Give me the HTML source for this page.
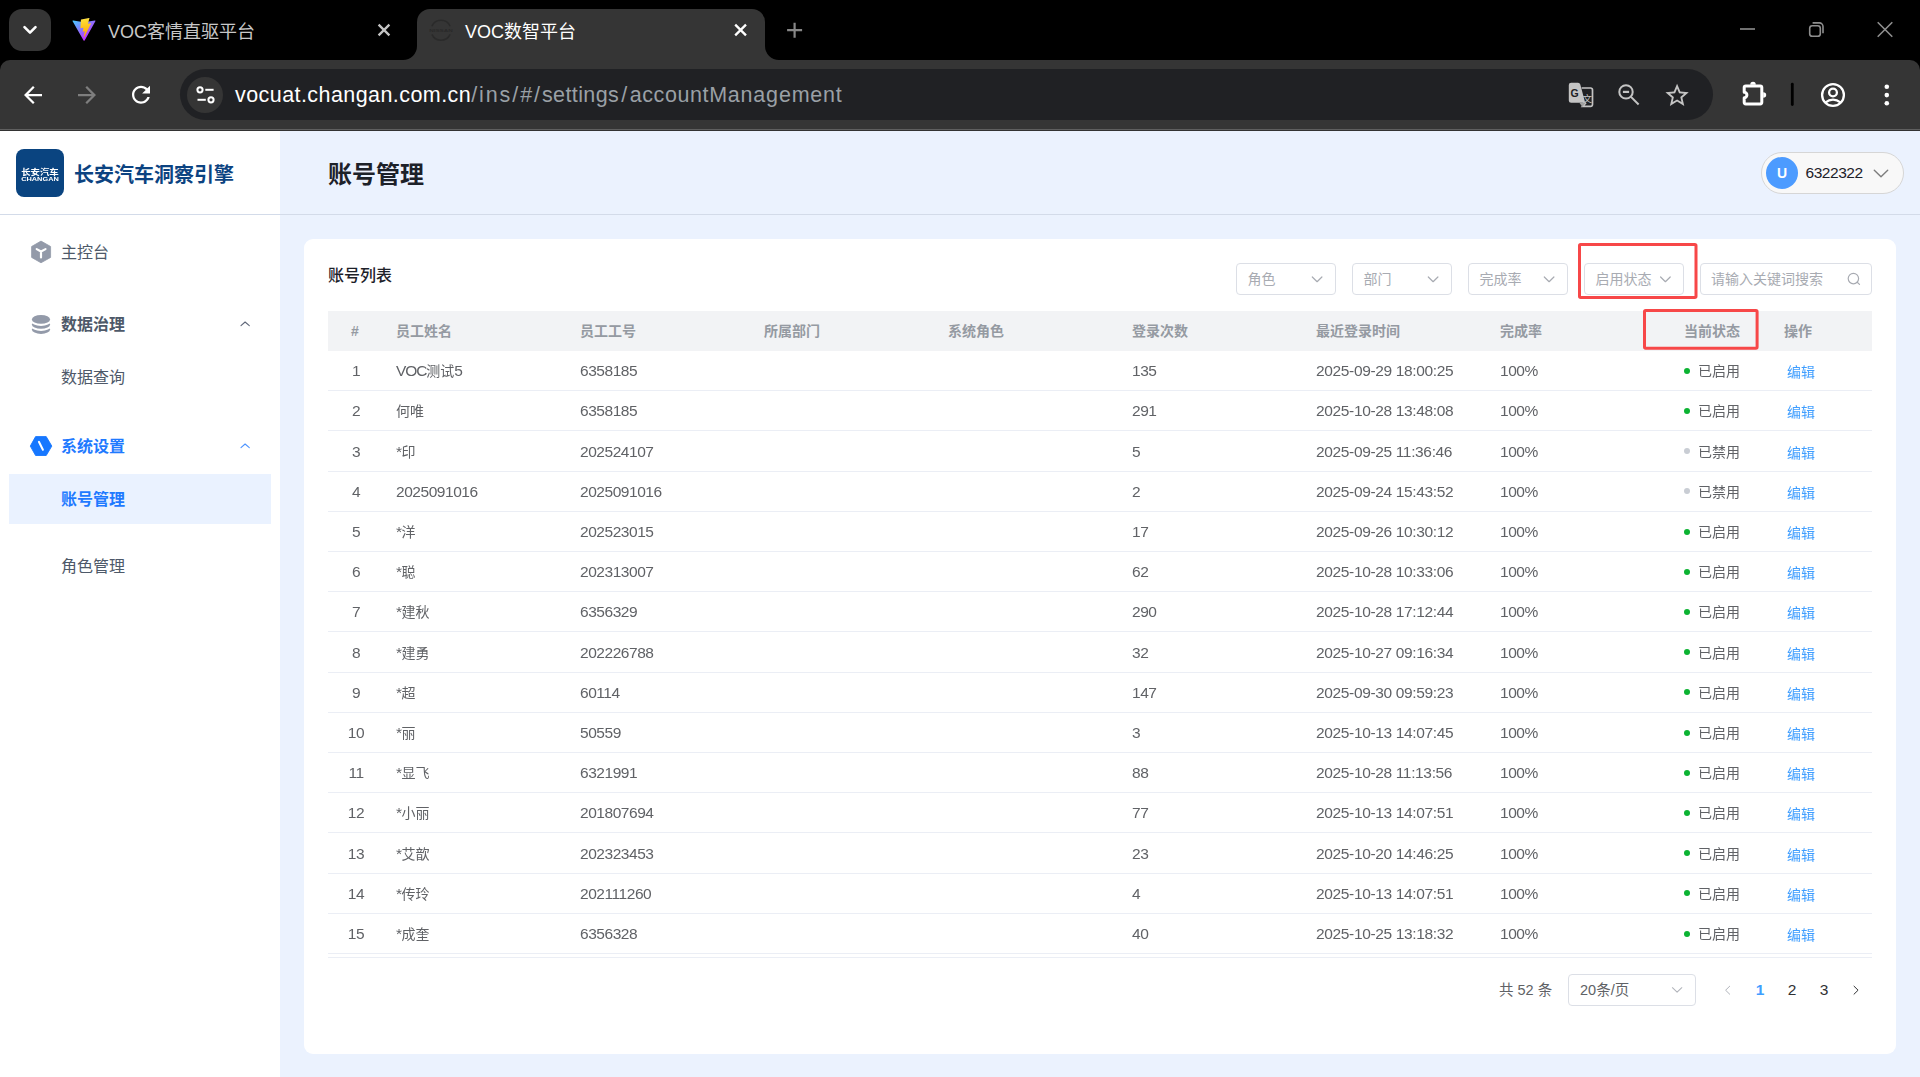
<!DOCTYPE html>
<html lang="zh-CN">
<head>
<meta charset="utf-8">
<title>VOC数智平台</title>
<style>
*{box-sizing:border-box;margin:0;padding:0}
html,body{width:1920px;height:1077px;overflow:hidden;background:#ebf2fe}
body{position:relative;font-family:"Liberation Sans","Noto Sans CJK SC",sans-serif;color:#606266}
.abs{position:absolute}
svg{position:absolute;overflow:visible}
/* ---------- browser chrome ---------- */
#tabstrip{left:0;top:0;width:1920px;height:80px;background:#000}
#toolbar{left:0;top:60px;width:1920px;height:69px;background:#353535;border-radius:10px 10px 0 0}
#tbline1{left:0;top:129px;width:1920px;height:1px;background:#5f5f5f}
#tbline2{left:0;top:130px;width:1920px;height:1px;background:#333}
#tabsearch{left:9px;top:9px;width:42px;height:42px;border-radius:13px;background:#353535}
#acttab{left:417px;top:9px;width:348px;height:52px;background:#353535;border-radius:13px 13px 0 0}
.tabtxt{font-size:18px;line-height:24px;white-space:nowrap;top:20px}
#omni{left:180px;top:69px;width:1533px;height:51px;border-radius:26px;background:#202124}
#siteinfo{left:187px;top:76.5px;width:36px;height:36px;border-radius:18px;background:#353535}
#url{left:235px;top:81px;font-size:21.5px;line-height:28px;white-space:nowrap;color:#9aa0a6;letter-spacing:1px}
#url b{font-weight:normal;color:#fff;letter-spacing:0.43px}
#url i{font-style:normal}
/* ---------- sidebar ---------- */
#side{left:0;top:131px;width:280px;height:946px;background:#fff}
#hline{left:0;top:214px;width:1920px;height:1px;background:#d3dbe9}
#logo{left:16px;top:149px;width:48px;height:48px;border-radius:8px;background:#0a4480}
#brand{left:74px;top:161px;font-size:20px;line-height:28px;font-weight:bold;color:#0c4381;white-space:nowrap}
.mi{left:61px;font-size:16px;line-height:24px;white-space:nowrap;color:#4e5969}
.mi.b{font-weight:bold}
.mi.blue{color:#1f7aff}
#selbg{left:9px;top:474px;width:262px;height:50px;background:#eaf2ff}
/* ---------- main ---------- */
#title{left:328px;top:158px;font-size:24px;line-height:34px;font-weight:bold;color:#1d2129;white-space:nowrap}
#user{left:1761px;top:152px;width:143px;height:42px;border-radius:21px;background:#f8f8f8;border:1px solid #d6d6d6}
#avatar{left:1766px;top:157px;width:32px;height:32px;border-radius:16px;background:#4c9bff;color:#fff;font-weight:bold;font-size:14px;line-height:32.6px;text-align:center}
#uname{left:1805.5px;top:161.6px;font-size:15.5px;line-height:22px;color:#1d2129;letter-spacing:-0.45px;white-space:nowrap}
#card{left:304px;top:239px;width:1592px;height:815px;background:#fff;border-radius:9px}
#ctitle{left:328px;top:264px;font-size:16px;line-height:24px;color:#1d2129;font-weight:500;white-space:nowrap}
.sel{top:263px;width:100px;height:32px;border:1px solid #dcdfe6;border-radius:4px;background:#fff}
.ph{top:268px;font-size:14px;line-height:22px;color:#a8abb2;white-space:nowrap}
.red{border:2.5px solid #f5484c;border-radius:2px}
/* ---------- table ---------- */
#thead{left:328px;top:311px;width:1544px;height:39.6px;background:#f2f3f5}
.th{top:320px;font-size:14px;line-height:22px;font-weight:bold;color:#959aa2;white-space:nowrap}
#rows{left:328px;top:351px;width:1544px;height:612px;will-change:transform}
.row{left:0;width:1544px;height:40.2px;border-bottom:1px solid #ebeef5}
.c{top:9.25px;font-size:15.5px;line-height:22px;white-space:nowrap;color:#606266;letter-spacing:-0.45px}
.c.nm{font-size:14px;letter-spacing:0;top:9.25px}
.c.nm .l{font-size:15.5px;letter-spacing:-0.45px}
.c.idx{left:0;width:56px;text-align:center}
.dot{left:1356px;top:16.8px;width:6px;height:6px;border-radius:3px;background:#0bb332}
.dot.off{background:#c9cdd4}
.st{left:1370px;top:9.25px;font-size:14px;letter-spacing:0}
.ed{left:1459px;top:10.15px;font-size:14px;letter-spacing:0;color:#409eff}
#tbl2{left:328px;top:957px;width:1544px;height:1px;background:#ebeef5}
/* ---------- pagination ---------- */
.pg{top:979px;font-size:14.5px;line-height:22px;white-space:nowrap;color:#606266}
#psel{left:1568px;top:974px;width:128px;height:32px;border:1px solid #dcdfe6;border-radius:4px;background:#fff}
.pn{top:978px;width:30px;text-align:center;font-size:15.5px;line-height:24px;color:#303133}
</style>
</head>
<body>
<!-- browser chrome -->
<div class="abs" id="tabstrip"></div>
<div class="abs" id="toolbar"></div>
<div class="abs" id="tbline1"></div>
<div class="abs" id="tbline2"></div>
<div class="abs" id="tabsearch"></div>
<div class="abs" id="acttab"></div>
<div class="abs tabtxt" style="left:108px;color:#c8c8c8">VOC客情直驱平台</div>
<div class="abs tabtxt" style="left:465px;color:#fff">VOC数智平台</div>
<div class="abs" id="omni"></div>
<div class="abs" id="siteinfo"></div>
<div class="abs" id="url"><b>vocuat.changan.com.cn</b><i style="letter-spacing:1.92px">/ins/#/</i><i style="letter-spacing:0.39px">settings</i><i style="letter-spacing:2.3px;padding-left:2.2px">/</i><i style="letter-spacing:0.6px">account</i><i style="letter-spacing:0.8px">Management</i></div>


<!-- chrome icons -->
<svg id="cicons" style="left:0;top:0" width="1920" height="131" viewBox="0 0 1920 131">
<defs>
<linearGradient id="vg1" x1="6" y1="33" x2="235" y2="344" gradientUnits="userSpaceOnUse"><stop offset="0" stop-color="#41D1FF"/><stop offset="1" stop-color="#BD34FE"/></linearGradient>
<linearGradient id="vg2" x1="194.651" y1="8.818" x2="236.076" y2="292.989" gradientUnits="userSpaceOnUse"><stop offset="0" stop-color="#FFEA83"/><stop offset="0.083" stop-color="#FFDD35"/><stop offset="1" stop-color="#FFA800"/></linearGradient>
</defs>
<!-- inverse corners of active tab -->
<path d="M403 60 A14 14 0 0 0 417 46 V60 Z" fill="#353535"/>
<path d="M779 60 A14 14 0 0 1 765 46 V60 Z" fill="#353535"/>
<!-- tab search chevron -->
<path d="M24.5 27.2 L30 32.7 L35.5 27.2" fill="none" stroke="#fff" stroke-width="2.6" stroke-linecap="round" stroke-linejoin="round"/>
<!-- vite -->
<g transform="translate(72 17.8) scale(0.0585)">
<path d="M399.641 59.5246L215.643 388.545C211.844 395.338 202.084 395.378 198.228 388.618L10.5817 59.5563C6.38087 52.1896 12.6802 43.2665 21.0281 44.7586L205.223 77.6824C206.398 77.8924 207.601 77.8904 208.776 77.6763L389.119 44.8058C397.439 43.2894 403.768 52.1434 399.641 59.5246Z" fill="url(#vg1)"/>
<path d="M292.965 1.5744L156.801 28.2552C154.563 28.6937 152.906 30.5903 152.771 32.8664L144.395 174.33C144.198 177.662 147.258 180.248 150.51 179.498L188.42 170.749C191.967 169.931 195.172 173.055 194.443 176.622L183.18 231.775C182.422 235.487 185.907 238.661 189.532 237.56L212.947 230.446C216.577 229.344 220.065 232.527 219.297 236.242L201.398 322.875C200.278 328.294 207.486 331.249 210.492 326.603L212.5 323.5L323.454 102.072C325.312 98.3645 322.108 94.137 318.036 94.9228L279.014 102.454C275.347 103.161 272.227 99.746 273.262 96.1583L298.731 7.86689C299.767 4.27314 296.636 0.855181 292.965 1.5744Z" fill="url(#vg2)"/>
</g>
<!-- tab close buttons -->
<path d="M378.6 24.6 L389.4 35.4 M389.4 24.6 L378.6 35.4" stroke="#c4c4c4" stroke-width="2.3" fill="none"/>
<path d="M735.2 24.6 L746 35.4 M746 24.6 L735.2 35.4" stroke="#fff" stroke-width="2.3" fill="none"/>
<!-- faint favicon -->
<g fill="none" stroke="#2a2a2a" stroke-width="1.5">
<path d="M431.9 26.2 A10 10 0 0 1 450.1 26.2"/>
<path d="M431.9 34.4 A10 10 0 0 0 450.1 34.4"/>
</g>
<text x="441" y="31.7" font-size="3.7" font-weight="bold" fill="#292929" text-anchor="middle" textLength="23.6" lengthAdjust="spacingAndGlyphs" font-family="Liberation Sans, sans-serif">NISSAN</text>
<!-- new tab plus -->
<path d="M787.1 30.2 H802.1 M794.6 22.7 V37.7" stroke="#878787" stroke-width="2.2" fill="none"/>
<!-- window controls -->
<path d="M1740 29 H1755" stroke="#8e8e8e" stroke-width="1.6" fill="none"/>
<rect x="1809.7" y="25.7" width="10.6" height="10.6" rx="2.6" fill="none" stroke="#8e8e8e" stroke-width="1.6"/>
<path d="M1812.6 22.9 H1819.4 A3.6 3.6 0 0 1 1823 26.5 V33.3" fill="none" stroke="#8e8e8e" stroke-width="1.6"/>
<path d="M1877.7 22.2 L1892.3 36.8 M1892.3 22.2 L1877.7 36.8" stroke="#8e8e8e" stroke-width="1.6" fill="none"/>
<!-- nav buttons -->
<g transform="translate(19.5 81.5) scale(1.125)"><path d="M20 11H7.83l5.59-5.59L12 4l-8 8 8 8 1.41-1.41L7.83 13H20v-2z" fill="#fff"/></g>
<g transform="translate(100.5 81.5) scale(-1.125 1.125)"><path d="M20 11H7.83l5.59-5.59L12 4l-8 8 8 8 1.41-1.41L7.83 13H20v-2z" fill="#7e7e7e"/></g>
<g transform="translate(127.5 81.2) scale(1.125)"><path d="M17.65 6.35C16.2 4.9 14.21 4 12 4c-4.42 0-7.99 3.58-7.99 8s3.57 8 7.99 8c3.73 0 6.84-2.55 7.73-6h-2.08c-.82 2.33-3.04 4-5.65 4-3.31 0-6-2.69-6-6s2.69-6 6-6c1.66 0 3.14.69 4.22 1.78L13 11h7V4l-2.35 2.35z" fill="#fff"/></g>
<!-- site info (tune) icon -->
<g fill="none" stroke="#fff" stroke-width="2">
<circle cx="200" cy="89.8" r="2.6"/><path d="M205.3 89.8 H213.6"/>
<circle cx="211" cy="99.8" r="2.6"/><path d="M197.5 99.8 H205.8"/>
</g>
<!-- translate icon -->
<path d="M1571.2 82.7 H1578 A2.4 2.4 0 0 1 1580.3 84.5 L1585.2 102.8 H1571.2 A2.4 2.4 0 0 1 1568.8 100.4 V85.1 A2.4 2.4 0 0 1 1571.2 82.7 Z" fill="#c4c4c4"/>
<path d="M1581.6 88 H1590.7 A1.8 1.8 0 0 1 1592.5 89.8 V104.6 A1.8 1.8 0 0 1 1590.7 106.4 H1582.6 L1586 102.6" fill="none" stroke="#c4c4c4" stroke-width="1.7"/>
<path d="M1579.4 102.8 L1582.4 106.9 L1585.4 102.8 Z" fill="#a0a0a0"/>
<text x="1574.7" y="97.4" font-size="10.5" font-weight="bold" fill="#202124" text-anchor="middle" font-family="Liberation Sans, sans-serif">G</text>
<text x="1587.2" y="102.3" font-size="9.5" fill="#c4c4c4" text-anchor="middle" font-family="Noto Sans CJK SC, sans-serif">文</text>
<!-- zoom out -->
<g fill="none" stroke="#c4c4c4" stroke-width="2">
<circle cx="1626" cy="91.9" r="6.7"/><path d="M1631 96.9 L1638.6 104.5"/><path d="M1622.9 91.9 H1629.1" stroke-width="2.2"/>
</g>
<!-- star -->
<g transform="translate(1663.1 81.5) scale(1.165)"><path d="M22 9.24l-7.19-.62L12 2 9.19 8.63 2 9.24l5.46 4.73L5.82 21 12 17.27 18.18 21l-1.63-7.03L22 9.24zM12 15.4l-3.76 2.27 1-4.28-3.32-2.88 4.38-.38L12 6.1l1.71 4.04 4.38.38-3.32 2.88 1 4.28L12 15.4z" fill="#c4c4c4"/></g>
<!-- extensions puzzle -->
<path d="M1744.2 92.3 V87.5 A1.6 1.6 0 0 1 1745.8 85.9 H1760.2 A1.6 1.6 0 0 1 1761.8 87.5 V102.3 A1.6 1.6 0 0 1 1760.2 103.9 H1745.8 A1.6 1.6 0 0 1 1744.2 102.3 V97.7 A2.7 2.7 0 0 0 1744.2 92.3 Z" fill="none" stroke="#fff" stroke-width="3" stroke-linejoin="round"/>
<path d="M1750.2 84.7 A2.8 3 0 0 1 1755.8 84.7 Z" fill="#fff"/>
<path d="M1763.2 92.2 A3 2.8 0 0 1 1763.2 97.8 Z" fill="#fff"/>
<!-- separator -->
<rect x="1790.9" y="82.8" width="2.8" height="23.2" rx="1.4" fill="#000"/>
<!-- profile -->
<g fill="none" stroke="#fff" stroke-width="2.3">
<circle cx="1833" cy="95" r="10.9"/><circle cx="1833" cy="92.5" r="3.9"/>
<path d="M1825.2 102.6 Q1833 96.6 1840.8 102.6"/>
</g>
<!-- menu dots -->
<g fill="#fff"><circle cx="1886.8" cy="86.8" r="2.3"/><circle cx="1886.8" cy="95.1" r="2.3"/><circle cx="1886.8" cy="103.3" r="2.3"/></g>
</svg>

<!-- sidebar -->
<div class="abs" id="side"></div>
<div class="abs" id="logo"></div>
<div class="abs" id="brand">长安汽车洞察引擎</div>
<div class="abs" id="selbg"></div>
<div class="abs mi" style="top:241px">主控台</div>
<div class="abs mi b" style="top:313px">数据治理</div>
<div class="abs mi" style="top:366px">数据查询</div>
<div class="abs mi b blue" style="top:435px">系统设置</div>
<div class="abs mi b blue" style="top:488px">账号管理</div>
<div class="abs mi" style="top:554.5px">角色管理</div>

<!-- main header -->
<div class="abs" id="hline"></div>
<div class="abs" id="title">账号管理</div>
<div class="abs" id="user"></div>
<div class="abs" id="avatar">U</div>
<div class="abs" id="uname">6322322</div>

<!-- card -->
<div class="abs" id="card"></div>
<div class="abs" id="ctitle">账号列表</div>
<div class="abs sel" style="left:1236px"></div>
<div class="abs sel" style="left:1352px"></div>
<div class="abs sel" style="left:1468px"></div>
<div class="abs sel" style="left:1584px"></div>
<div class="abs sel" style="left:1700px;width:172px"></div>
<div class="abs ph" style="left:1247.5px">角色</div>
<div class="abs ph" style="left:1363.5px">部门</div>
<div class="abs ph" style="left:1479.5px">完成率</div>
<div class="abs ph" style="left:1595.5px">启用状态</div>
<div class="abs ph" style="left:1711px">请输入关键词搜索</div>

<!-- table -->
<div class="abs" id="thead"></div>
<div class="abs th" style="left:351px">#</div>
<div class="abs th" style="left:396px">员工姓名</div>
<div class="abs th" style="left:580px">员工工号</div>
<div class="abs th" style="left:764px">所属部门</div>
<div class="abs th" style="left:948px">系统角色</div>
<div class="abs th" style="left:1132px">登录次数</div>
<div class="abs th" style="left:1316px">最近登录时间</div>
<div class="abs th" style="left:1500px">完成率</div>
<div class="abs th" style="left:1684px">当前状态</div>
<div class="abs th" style="left:1784px">操作</div>
<div class="abs" id="rows">
<div class="abs row" style="top:0.0px"><div class="abs c idx">1</div><div class="abs c nm" style="left:68px"><span class="l" style="letter-spacing:-1.1px">VOC</span>测试<span class="l">5</span></div><div class="abs c" style="left:252px">6358185</div><div class="abs c" style="left:804px">135</div><div class="abs c" style="left:988px;letter-spacing:-0.35px">2025-09-29 18:00:25</div><div class="abs c" style="left:1172px">100%</div><div class="abs dot"></div><div class="abs c st">已启用</div><div class="abs c ed">编辑</div></div>
<div class="abs row" style="top:40.2px"><div class="abs c idx">2</div><div class="abs c nm" style="left:68px">何唯</div><div class="abs c" style="left:252px">6358185</div><div class="abs c" style="left:804px">291</div><div class="abs c" style="left:988px;letter-spacing:-0.35px">2025-10-28 13:48:08</div><div class="abs c" style="left:1172px">100%</div><div class="abs dot"></div><div class="abs c st">已启用</div><div class="abs c ed">编辑</div></div>
<div class="abs row" style="top:80.4px"><div class="abs c idx">3</div><div class="abs c nm" style="left:68px"><span class="l">*</span>印</div><div class="abs c" style="left:252px">202524107</div><div class="abs c" style="left:804px">5</div><div class="abs c" style="left:988px;letter-spacing:-0.35px">2025-09-25 11:36:46</div><div class="abs c" style="left:1172px">100%</div><div class="abs dot off"></div><div class="abs c st">已禁用</div><div class="abs c ed">编辑</div></div>
<div class="abs row" style="top:120.6px"><div class="abs c idx">4</div><div class="abs c nm" style="left:68px"><span class="l">2025091016</span></div><div class="abs c" style="left:252px">2025091016</div><div class="abs c" style="left:804px">2</div><div class="abs c" style="left:988px;letter-spacing:-0.35px">2025-09-24 15:43:52</div><div class="abs c" style="left:1172px">100%</div><div class="abs dot off"></div><div class="abs c st">已禁用</div><div class="abs c ed">编辑</div></div>
<div class="abs row" style="top:160.8px"><div class="abs c idx">5</div><div class="abs c nm" style="left:68px"><span class="l">*</span>洋</div><div class="abs c" style="left:252px">202523015</div><div class="abs c" style="left:804px">17</div><div class="abs c" style="left:988px;letter-spacing:-0.35px">2025-09-26 10:30:12</div><div class="abs c" style="left:1172px">100%</div><div class="abs dot"></div><div class="abs c st">已启用</div><div class="abs c ed">编辑</div></div>
<div class="abs row" style="top:201.0px"><div class="abs c idx">6</div><div class="abs c nm" style="left:68px"><span class="l">*</span>聪</div><div class="abs c" style="left:252px">202313007</div><div class="abs c" style="left:804px">62</div><div class="abs c" style="left:988px;letter-spacing:-0.35px">2025-10-28 10:33:06</div><div class="abs c" style="left:1172px">100%</div><div class="abs dot"></div><div class="abs c st">已启用</div><div class="abs c ed">编辑</div></div>
<div class="abs row" style="top:241.2px"><div class="abs c idx">7</div><div class="abs c nm" style="left:68px"><span class="l">*</span>建秋</div><div class="abs c" style="left:252px">6356329</div><div class="abs c" style="left:804px">290</div><div class="abs c" style="left:988px;letter-spacing:-0.35px">2025-10-28 17:12:44</div><div class="abs c" style="left:1172px">100%</div><div class="abs dot"></div><div class="abs c st">已启用</div><div class="abs c ed">编辑</div></div>
<div class="abs row" style="top:281.4px"><div class="abs c idx">8</div><div class="abs c nm" style="left:68px"><span class="l">*</span>建勇</div><div class="abs c" style="left:252px">202226788</div><div class="abs c" style="left:804px">32</div><div class="abs c" style="left:988px;letter-spacing:-0.35px">2025-10-27 09:16:34</div><div class="abs c" style="left:1172px">100%</div><div class="abs dot"></div><div class="abs c st">已启用</div><div class="abs c ed">编辑</div></div>
<div class="abs row" style="top:321.6px"><div class="abs c idx">9</div><div class="abs c nm" style="left:68px"><span class="l">*</span>超</div><div class="abs c" style="left:252px">60114</div><div class="abs c" style="left:804px">147</div><div class="abs c" style="left:988px;letter-spacing:-0.35px">2025-09-30 09:59:23</div><div class="abs c" style="left:1172px">100%</div><div class="abs dot"></div><div class="abs c st">已启用</div><div class="abs c ed">编辑</div></div>
<div class="abs row" style="top:361.8px"><div class="abs c idx">10</div><div class="abs c nm" style="left:68px"><span class="l">*</span>丽</div><div class="abs c" style="left:252px">50559</div><div class="abs c" style="left:804px">3</div><div class="abs c" style="left:988px;letter-spacing:-0.35px">2025-10-13 14:07:45</div><div class="abs c" style="left:1172px">100%</div><div class="abs dot"></div><div class="abs c st">已启用</div><div class="abs c ed">编辑</div></div>
<div class="abs row" style="top:402.0px"><div class="abs c idx">11</div><div class="abs c nm" style="left:68px"><span class="l">*</span>显飞</div><div class="abs c" style="left:252px">6321991</div><div class="abs c" style="left:804px">88</div><div class="abs c" style="left:988px;letter-spacing:-0.35px">2025-10-28 11:13:56</div><div class="abs c" style="left:1172px">100%</div><div class="abs dot"></div><div class="abs c st">已启用</div><div class="abs c ed">编辑</div></div>
<div class="abs row" style="top:442.2px"><div class="abs c idx">12</div><div class="abs c nm" style="left:68px"><span class="l">*</span>小丽</div><div class="abs c" style="left:252px">201807694</div><div class="abs c" style="left:804px">77</div><div class="abs c" style="left:988px;letter-spacing:-0.35px">2025-10-13 14:07:51</div><div class="abs c" style="left:1172px">100%</div><div class="abs dot"></div><div class="abs c st">已启用</div><div class="abs c ed">编辑</div></div>
<div class="abs row" style="top:482.4px"><div class="abs c idx">13</div><div class="abs c nm" style="left:68px"><span class="l">*</span>艾歆</div><div class="abs c" style="left:252px">202323453</div><div class="abs c" style="left:804px">23</div><div class="abs c" style="left:988px;letter-spacing:-0.35px">2025-10-20 14:46:25</div><div class="abs c" style="left:1172px">100%</div><div class="abs dot"></div><div class="abs c st">已启用</div><div class="abs c ed">编辑</div></div>
<div class="abs row" style="top:522.6px"><div class="abs c idx">14</div><div class="abs c nm" style="left:68px"><span class="l">*</span>传玲</div><div class="abs c" style="left:252px">202111260</div><div class="abs c" style="left:804px">4</div><div class="abs c" style="left:988px;letter-spacing:-0.35px">2025-10-13 14:07:51</div><div class="abs c" style="left:1172px">100%</div><div class="abs dot"></div><div class="abs c st">已启用</div><div class="abs c ed">编辑</div></div>
<div class="abs row" style="top:562.8px"><div class="abs c idx">15</div><div class="abs c nm" style="left:68px"><span class="l">*</span>成奎</div><div class="abs c" style="left:252px">6356328</div><div class="abs c" style="left:804px">40</div><div class="abs c" style="left:988px;letter-spacing:-0.35px">2025-10-25 13:18:32</div><div class="abs c" style="left:1172px">100%</div><div class="abs dot"></div><div class="abs c st">已启用</div><div class="abs c ed">编辑</div></div>
</div>
<div class="abs" id="tbl2"></div>


<!-- red annotation boxes -->

<!-- pagination -->
<div class="abs pg" style="left:1499px">共 52 条</div>
<div class="abs" id="psel"></div>
<div class="abs pg" style="left:1580px">20条/页</div>
<div class="abs pn" style="left:1745px;color:#409eff;font-weight:bold">1</div>
<div class="abs pn" style="left:1777px">2</div>
<div class="abs pn" style="left:1809px">3</div>

<!-- page icons -->
<svg id="picons" style="left:0;top:131px" width="1920" height="946" viewBox="0 131 1920 946">
<!-- logo text -->
<text x="40" y="174.9" font-size="8.2" font-weight="bold" fill="#fff" text-anchor="middle" textLength="37.6" lengthAdjust="spacingAndGlyphs" font-family="Noto Sans CJK SC, sans-serif">长安汽车</text>
<text x="40" y="180.5" font-size="5" font-weight="bold" fill="#fff" text-anchor="middle" textLength="37.6" lengthAdjust="spacingAndGlyphs" font-family="Liberation Sans, sans-serif">CHANGAN</text>
<!-- hex cube -->
<path d="M41 241.1 L50.6 246.5 V257.4 L41 262.8 L31.6 257.4 V246.5 Z" fill="#939aa9" stroke="#939aa9" stroke-width="0.8" stroke-linejoin="round"/>
<path d="M36.7 249.1 L41 251.5 L45.5 249.1 M41 251.5 V257.4" fill="none" stroke="#fff" stroke-width="2.2" stroke-linecap="round" stroke-linejoin="round"/>
<!-- database -->
<ellipse cx="41" cy="329.5" rx="9.1" ry="4.4" fill="#939aa9"/>
<ellipse cx="41" cy="326.5" rx="9.8" ry="4.4" fill="#fff"/>
<ellipse cx="41" cy="324.4" rx="9.1" ry="4.4" fill="#939aa9"/>
<ellipse cx="41" cy="321.5" rx="9.8" ry="4.4" fill="#fff"/>
<ellipse cx="41" cy="319.4" rx="9.1" ry="4.4" fill="#939aa9"/>
<!-- blue hex -->
<path d="M30.3 446.1 L35.6 436.6 H46.2 L51.8 446.1 L46.2 455.5 H35.6 Z" fill="#1677ff" stroke="#1677ff" stroke-width="0.9" stroke-linejoin="round"/>
<path d="M38.9 441.8 L42.9 449.8" fill="none" stroke="#fff" stroke-width="2" stroke-linecap="round"/>
<!-- sidebar chevrons -->
<path d="M241 325.7 L245.1 322 L249.3 325.7" fill="none" stroke="#5e6678" stroke-width="1.1" stroke-linecap="round" stroke-linejoin="round"/>
<path d="M241 447.7 L245.1 444 L249.3 447.7" fill="none" stroke="#4c93ff" stroke-width="1.1" stroke-linecap="round" stroke-linejoin="round"/>
<!-- user chevron -->
<path d="M1874.3 170.2 L1881 176.7 L1887.7 170.2" fill="none" stroke="#7d7d7d" stroke-width="1.4" stroke-linecap="round" stroke-linejoin="round"/>
<!-- select chevrons -->
<path d="M1312.3 277 L1317.1 281.7 L1321.8999999999999 277" fill="none" stroke="#a8abb2" stroke-width="1.2" stroke-linecap="round" stroke-linejoin="round"/>
<path d="M1428.3 277 L1433.1 281.7 L1437.8999999999999 277" fill="none" stroke="#a8abb2" stroke-width="1.2" stroke-linecap="round" stroke-linejoin="round"/>
<path d="M1544.3 277 L1549.1 281.7 L1553.8999999999999 277" fill="none" stroke="#a8abb2" stroke-width="1.2" stroke-linecap="round" stroke-linejoin="round"/>
<path d="M1660.6 277 L1665.3999999999999 281.7 L1670.1999999999998 277" fill="none" stroke="#a8abb2" stroke-width="1.2" stroke-linecap="round" stroke-linejoin="round"/>

<!-- search icon -->
<circle cx="1853.4" cy="278.6" r="5.2" fill="none" stroke="#a8abb2" stroke-width="1.2"/>
<path d="M1857.2 282.2 L1859.5 284.4" fill="none" stroke="#a8abb2" stroke-width="1.2" stroke-linecap="round"/>
<!-- red annotation boxes -->
<rect x="1579.5" y="244.5" width="116.5" height="53" rx="1.2" fill="none" stroke="#f74748" stroke-width="3"/>
<rect x="1644.5" y="310.6" width="112.6" height="37.6" rx="1.2" fill="none" stroke="#f74748" stroke-width="3"/>
<!-- pagination -->
<path d="M1672.4 987.7 L1677.1 992.2 L1681.8 987.7" fill="none" stroke="#b0b3ba" stroke-width="1.05" stroke-linecap="round" stroke-linejoin="round"/>
<path d="M1729.7 986.2 L1725.6 990.2 L1729.7 994.2" fill="none" stroke="#b0b3ba" stroke-width="1" stroke-linecap="round" stroke-linejoin="round"/>
<path d="M1854 986.2 L1858.1 990.2 L1854 994.2" fill="none" stroke="#303133" stroke-width="1" stroke-linecap="round" stroke-linejoin="round"/>
</svg>
</body>
</html>
